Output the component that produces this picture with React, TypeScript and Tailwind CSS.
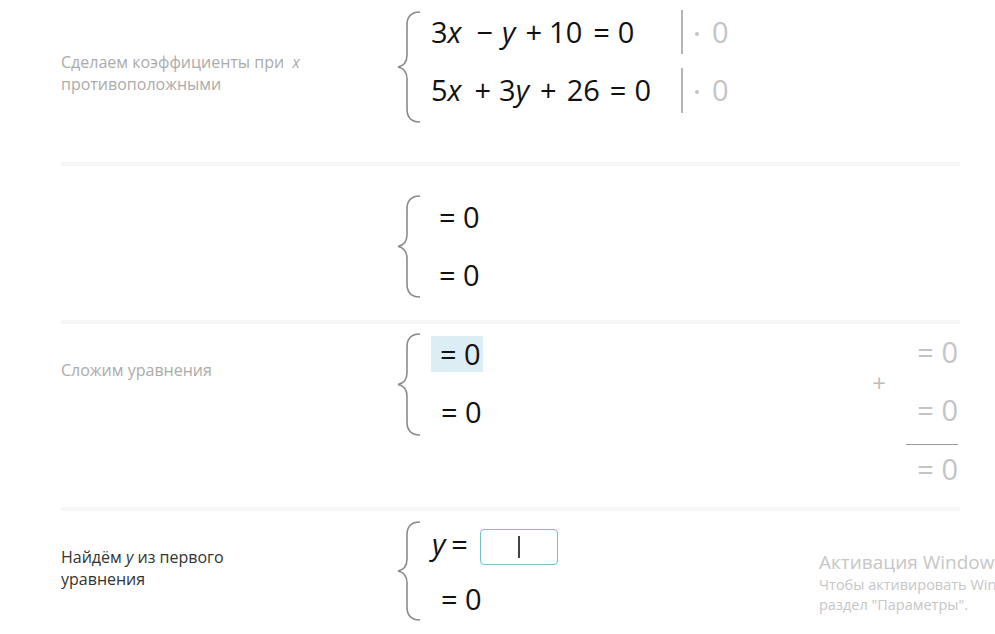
import React from "react";

const font = { fontFamily: '"Open Sans", "Noto Sans", sans-serif' };

function Brace({ h }: { h: number }) {
  const m = h / 2;
  return (
    <svg width="26" height={h} viewBox={`0 0 26 ${h}`} className="shrink-0">
      <path
        d={`M23 1 C14 1 10 5 10 14 L10 ${m - 12} C10 ${m - 4} 6 ${m - 1} 1 ${m} C6 ${m + 1} 10 ${m + 4} 10 ${m + 12} L10 ${h - 14} C10 ${h - 5} 14 ${h - 1} 23 ${h - 1}`}
        fill="none"
        stroke="#8a8a8a"
        strokeWidth="1.6"
      />
    </svg>
  );
}

function Sep() {
  return <div className="ml-[61px] mr-[35px] h-[4px] bg-[#f6f6f6]" />;
}

function Eq({ children, className = "" }: { children: React.ReactNode; className?: string }) {
  return <div className={`flex h-[58px] items-center whitespace-pre text-[29px] text-[#111] ${className}`}>{children}</div>;
}

const I = ({ c }: { c: string }) => <i className="italic">{c}</i>;

export default function App() {
  return (
    <div className="relative h-[634px] w-full overflow-hidden bg-white" style={font}>
      {/* section 1 */}
      <div className="flex h-[162px] pl-[61px]">
        <div className="w-[336px] pt-[51px] text-[16px] leading-[22px] text-[#ababab]">
          Сделаем коэффициенты при <i className="ml-1 italic">x</i>
          <br />
          противоположными
        </div>
        <div className="flex pt-[11px]">
          <Brace h={112} />
          <div className="-mt-[8px] ml-[8px] flex">
            <div>
              <Eq>
                <span>3<I c="x" /></span>
                <span className="ml-[15px]">−</span>
                <span className="ml-[9px]"><I c="y" /></span>
                <span className="ml-[10px]">+</span>
                <span className="ml-[7px]">10</span>
                <span className="ml-[11px]">=</span>
                <span className="ml-[8px]">0</span>
              </Eq>
              <Eq>
                <span>5<I c="x" /></span>
                <span className="ml-[13px]">+</span>
                <span className="ml-[8px]">3<I c="y" /></span>
                <span className="ml-[11px]">+</span>
                <span className="ml-[10px]">26</span>
                <span className="ml-[10px]">=</span>
                <span className="ml-[8px]">0</span>
              </Eq>
            </div>
            <div className="ml-[30px] flex flex-col">
              <div className="flex h-[58px] items-center">
                <div className="h-[44px] w-[2px] bg-[#b4b4b4]" />
                <span className="ml-[12px] mt-[4px] h-[4px] w-[4px] rounded-full bg-[#c4c4c4]" />
                <span className="ml-[13px] text-[29px] text-[#c4c4c4]">0</span>
              </div>
              <div className="flex h-[58px] items-center">
                <div className="h-[45px] w-[2px] bg-[#b4b4b4]" />
                <span className="ml-[12px] mt-[4px] h-[4px] w-[4px] rounded-full bg-[#c4c4c4]" />
                <span className="ml-[13px] text-[29px] text-[#c4c4c4]">0</span>
              </div>
            </div>
          </div>
        </div>
      </div>
      <Sep />

      {/* section 2 */}
      <div className="flex h-[154px] pl-[61px]">
        <div className="w-[336px]" />
        <div className="flex pt-[29px]">
          <Brace h={103} />
          <div className="-mt-[7px] ml-[16px]">
            <Eq>= 0</Eq>
            <Eq>= 0</Eq>
          </div>
        </div>
      </div>
      <Sep />

      {/* section 3 */}
      <div className="flex h-[183px] pl-[61px]">
        <div className="w-[336px] pt-[35px] text-[16px] leading-[22px] text-[#ababab]">Сложим уравнения</div>
        <div className="flex pt-[9px]">
          <Brace h={103} />
          <div className="-mt-[8px] ml-[8px]">
            <Eq>
              <span className="flex h-[36px] w-[52px] items-center bg-[#dcedf4] pl-[9px]">= 0</span>
            </Eq>
            <Eq className="pl-[10px]">= 0</Eq>
          </div>
        </div>
        <div className="ml-auto mr-[37px] flex items-start">
          <span className="mt-[41px] text-[24px] text-[#bdbdbd]">+</span>
          <div className="ml-[20px] flex w-[52px] flex-col items-end text-[29px] text-[#c4c4c4]">
            <div className="-mt-[1px] flex h-[58px] items-center">= 0</div>
            <div className="flex h-[58px] items-center">= 0</div>
            <div className="mt-[5px] h-px w-[52px] bg-[#9a9a9a]" />
            <div className="flex h-[48px] items-center">= 0</div>
          </div>
        </div>
      </div>
      <Sep />

      {/* section 4 */}
      <div className="flex h-[124px] pl-[61px]">
        <div className="w-[336px] pt-[35px] text-[16px] leading-[22px] text-[#333]">
          Найдём <i className="italic">y</i> из первого
          <br />
          уравнения
        </div>
        <div className="flex pt-[10px]">
          <Brace h={100} />
          <div className="-mt-[6px] ml-[9px]">
            <Eq>
              <I c="y" />
              <span className="ml-[6px]">=</span>
              <span className="ml-[12px] mt-[5px] flex h-[36px] w-[78px] items-center justify-center rounded-[4px] border-[1.5px] border-[#7cbccb]">
                <span className="h-[22px] w-[2px] bg-[#444]" />
              </span>
            </Eq>
            <Eq className="-mt-[3px] pl-[9px]">= 0</Eq>
          </div>
        </div>
      </div>

      {/* windows activation watermark */}
      <div className="pointer-events-none absolute left-[819px] top-[549px] whitespace-nowrap text-[#c6c6c6]">
        <div className="text-[19px] leading-[26px]">Активация Windows</div>
        <div className="text-[14.5px] leading-[20px]">Чтобы активировать Windows, перейдите в</div>
        <div className="text-[14.5px] leading-[20px]">раздел "Параметры".</div>
      </div>
    </div>
  );
}
